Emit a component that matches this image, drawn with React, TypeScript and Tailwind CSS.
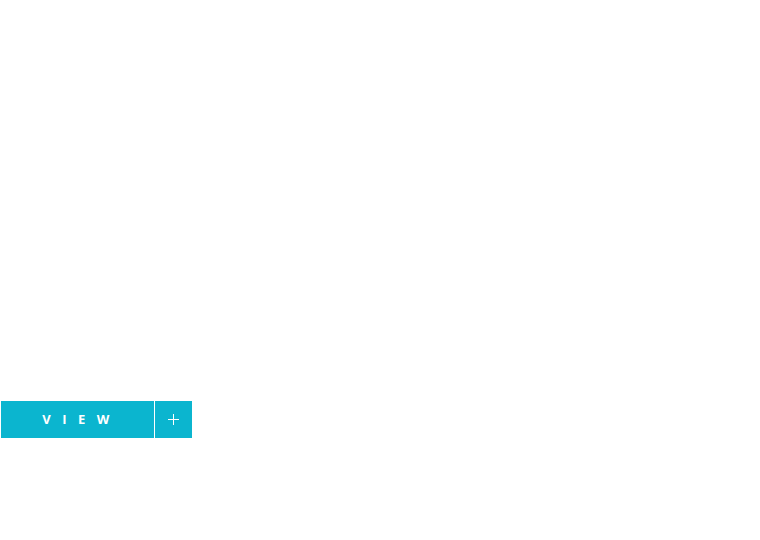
import React from "react";

export default function App() {
  return (
    <div className="w-[760px] h-[540px] bg-white relative">
      <div className="pt-[401px] pl-[1px] flex gap-[1px]">
        <button className="w-[153px] h-[37px] bg-[#0bb5cf] flex items-center justify-center text-white text-[13px] leading-none font-bold tracking-[11.5px] pl-[8px]" style={{ fontFamily: '"Open Sans", sans-serif' }}>
          VIEW
        </button>
        <button className="w-[37px] h-[37px] bg-[#0bb5cf] flex items-center justify-center">
          <svg width="11" height="11" viewBox="0 0 11 11">
            <path d="M5.5 0V11M0 5.5H11" stroke="white" strokeWidth="1" />
          </svg>
        </button>
      </div>
    </div>
  );
}
